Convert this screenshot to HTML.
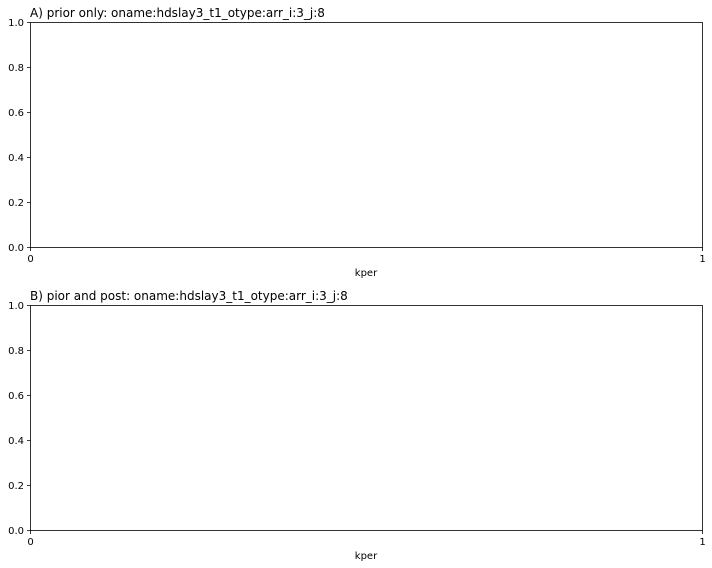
<!DOCTYPE html>
<html><head><style>html,body{margin:0;padding:0;background:#fff}svg{display:block}</style></head><body>
<svg width="712" height="568" xmlns="http://www.w3.org/2000/svg" font-family="DejaVu Sans, Liberation Sans, sans-serif">
<rect width="712" height="568" fill="#fff"/>
<g stroke="#000" stroke-width="0.8" fill="none">
<rect x="30.5" y="22.5" width="672" height="225"/>
<rect x="30.5" y="305.5" width="672" height="225"/>
<path d="M27 22.5h3.5M27 67.5h3.5M27 112.5h3.5M27 157.5h3.5M27 202.5h3.5M27 247.5h3.5M30.5 247.5v3.5M702.5 247.5v3.5"/>
<path d="M27 305.5h3.5M27 350.5h3.5M27 395.5h3.5M27 440.5h3.5M27 485.5h3.5M27 530.5h3.5M30.5 530.5v3.5M702.5 530.5v3.5"/>
</g>
<g font-size="10" fill="#000" text-anchor="end">
<text x="24" y="26">1.0</text><text x="24" y="71">0.8</text><text x="24" y="116">0.6</text><text x="24" y="161">0.4</text><text x="24" y="206">0.2</text><text x="24" y="251">0.0</text>
<text x="24" y="309">1.0</text><text x="24" y="354">0.8</text><text x="24" y="399">0.6</text><text x="24" y="444">0.4</text><text x="24" y="489">0.2</text><text x="24" y="534">0.0</text>
</g>
<g font-size="10" fill="#000" text-anchor="middle">
<text x="30.5" y="262">0</text><text x="702.5" y="262">1</text><text x="366" y="276">kper</text>
<text x="30.5" y="545">0</text><text x="702.5" y="545">1</text><text x="366" y="559">kper</text>
</g>
<g font-size="12" fill="#000">
<text x="30" y="17">A) prior only: oname:hdslay3_t1_otype:arr_i:3_j:8</text>
<text x="30" y="300">B) pior and post: oname:hdslay3_t1_otype:arr_i:3_j:8</text>
</g>
</svg>
</body></html>
